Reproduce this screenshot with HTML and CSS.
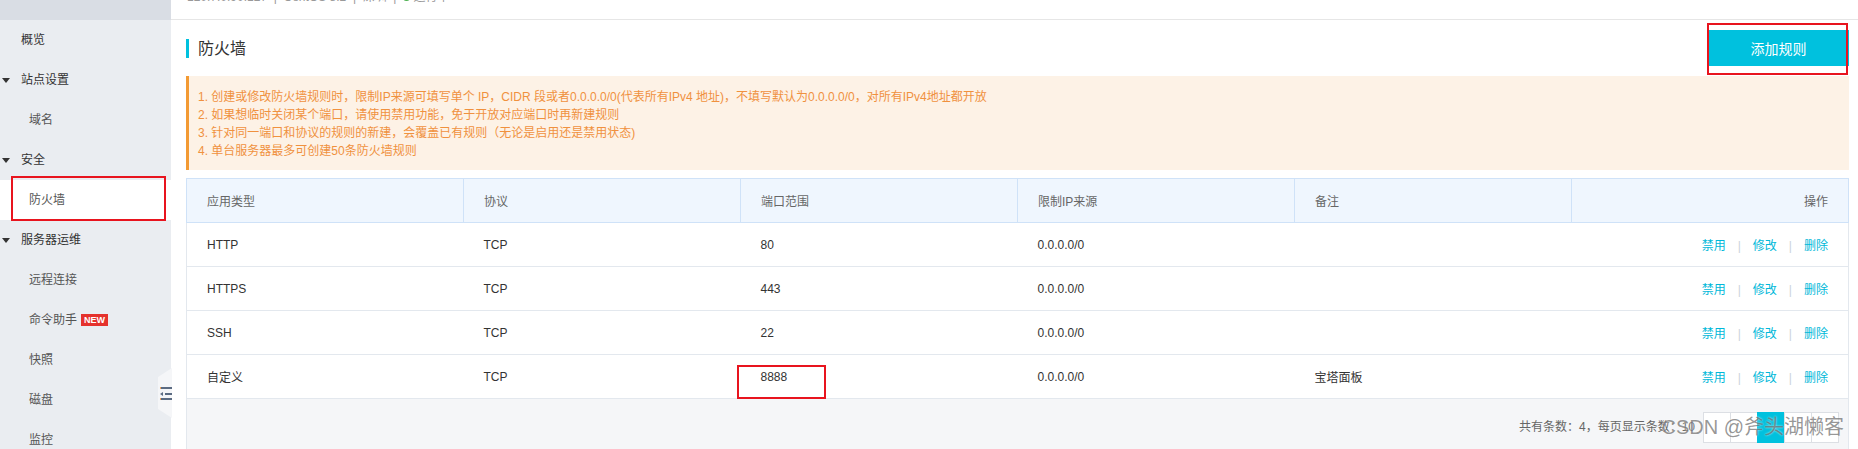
FILE: index.html
```html
<!DOCTYPE html>
<html lang="zh-CN">
<head>
    <meta charset="UTF-8">
    <title>防火墙</title>
    <link rel="stylesheet" href="styles.css">
</head>
<body>
<div class="page">
    <aside class="sidebar">
        <div class="side-top"></div>
        <ul class="menu">
            <li class="item">概览</li>
            <li class="group"><span class="caret"></span>站点设置</li>
            <li class="sub">域名</li>
            <li class="group"><span class="caret"></span>安全</li>
            <li class="sub active"><span class="mark">防火墙</span></li>
            <li class="group"><span class="caret"></span>服务器运维</li>
            <li class="sub">远程连接</li>
            <li class="sub">命令助手<span class="badge-new">NEW</span></li>
            <li class="sub">快照</li>
            <li class="sub">磁盘</li>
            <li class="sub">监控</li>
        </ul>
        <div class="collapse-handle">
            <svg width="14" height="50" viewBox="0 0 14 50">
                <rect x="2" y="19" width="12" height="2" fill="#5b6b82"/>
                <rect x="2" y="19" width="1" height="2" fill="#f0a35a"/>
                <path d="M2 26 L5 24 L5 28 Z" fill="#5b6b82"/>
                <rect x="7" y="25" width="7" height="2" fill="#5b6b82"/>
                <rect x="2" y="30" width="12" height="2" fill="#5b6b82"/>
                <rect x="2" y="30" width="1" height="2" fill="#f0a35a"/>
            </svg>
        </div>
    </aside>

    <main class="main">
        <div class="topbar">
            <span class="server-info">120.7.0.90.127 &nbsp;|&nbsp; CentOS 8.2 &nbsp;|&nbsp; 深圳 &nbsp;|&nbsp; <span class="dot"></span> 运行中</span>
        </div>

        <div class="content">
            <div class="title-row">
                <h2 class="title">防火墙</h2>
                <div class="btn-wrap">
                    <button class="btn-add">添加规则</button>
                </div>
            </div>

            <div class="notice">
                <div>1. 创建或修改防火墙规则时，限制IP来源可填写单个 IP，CIDR 段或者0.0.0.0/0(代表所有IPv4 地址)，不填写默认为0.0.0.0/0，对所有IPv4地址都开放</div>
                <div>2. 如果想临时关闭某个端口，请使用禁用功能，免于开放对应端口时再新建规则</div>
                <div>3. 针对同一端口和协议的规则的新建，会覆盖已有规则（无论是启用还是禁用状态)</div>
                <div>4. 单台服务器最多可创建50条防火墙规则</div>
            </div>

            <table class="rules">
                <thead>
                    <tr>
                        <th>应用类型</th>
                        <th>协议</th>
                        <th>端口范围</th>
                        <th>限制IP来源</th>
                        <th>备注</th>
                        <th class="ops">操作</th>
                    </tr>
                </thead>
                <tbody>
                    <tr>
                        <td>HTTP</td><td>TCP</td><td>80</td><td>0.0.0.0/0</td><td></td>
                        <td class="ops"><a>禁用</a><span class="sep">|</span><a>修改</a><span class="sep">|</span><a>删除</a></td>
                    </tr>
                    <tr>
                        <td>HTTPS</td><td>TCP</td><td>443</td><td>0.0.0.0/0</td><td></td>
                        <td class="ops"><a>禁用</a><span class="sep">|</span><a>修改</a><span class="sep">|</span><a>删除</a></td>
                    </tr>
                    <tr>
                        <td>SSH</td><td>TCP</td><td>22</td><td>0.0.0.0/0</td><td></td>
                        <td class="ops"><a>禁用</a><span class="sep">|</span><a>修改</a><span class="sep">|</span><a>删除</a></td>
                    </tr>
                    <tr>
                        <td>自定义</td><td>TCP</td><td><span class="port-mark">8888</span></td><td>0.0.0.0/0</td><td>宝塔面板</td>
                        <td class="ops"><a>禁用</a><span class="sep">|</span><a>修改</a><span class="sep">|</span><a>删除</a></td>
                    </tr>
                </tbody>
            </table>

            <div class="table-foot">
                <span class="total">共有条数：4，每页显示条数：10</span>
                <div class="pager">
                    <span class="pg"></span>
                    <span class="pg"></span>
                    <span class="pg current"></span>
                    <span class="pg"></span>
                    <span class="pg"></span>
                </div>
            </div>
        </div>
    </main>

    <div class="watermark">CSDN @斧头湖懒客</div>
</div>
</body>
</html>
```

FILE: styles.css
```css
html, body {
    margin: 0;
    padding: 0;
}
body {
    font-family: "Liberation Sans", "Noto Sans CJK SC", sans-serif;
    font-size: 12px;
    color: #333;
    background: #fff;
}

.page {
    position: relative;
    display: flex;
    width: 1858px;
    height: 449px;
    overflow: hidden;
}

/* sidebar */
.sidebar {
    position: relative;
    width: 171px;
    flex: none;
    background: #eaedf1;
}
.side-top {
    height: 20px;
    background: #d9dde4;
}
.menu {
    list-style: none;
    margin: 0;
    padding: 0;
}
.menu li {
    height: 40px;
    line-height: 40px;
    display: flex;
    align-items: center;
    white-space: nowrap;
}
.menu .item {
    padding-left: 21px;
    color: #333;
}
.menu .group {
    color: #333;
}
.menu .sub {
    padding-left: 29px;
    color: #555;
}
.menu .active {
    background: #fff;
}
.caret {
    width: 0;
    height: 0;
    margin-left: 2px;
    margin-right: 11px;
    border-left: 4px solid transparent;
    border-right: 4px solid transparent;
    border-top: 5px solid #333;
}
.mark {
    position: relative;
    height: 40px;
}
.mark::after {
    content: "";
    position: absolute;
    left: -18px;
    top: -4px;
    width: 151px;
    height: 41px;
    border: 2px solid #e8141e;
}
.badge-new {
    margin-left: 4px;
    height: 12px;
    line-height: 12px;
    padding: 0 3px;
    background: #e5322d;
    color: #fff;
    font-size: 9px;
    font-weight: bold;
}
.collapse-handle {
    position: absolute;
    left: 158px;
    top: 368px;
    width: 14px;
    height: 50px;
    background: #f5f6f8;
    clip-path: polygon(0 18%, 100% 0, 100% 100%, 0 82%);
}
.collapse-handle svg {
    display: block;
}

/* main */
.main {
    flex: 1;
    min-width: 0;
    background: #fff;
}
.topbar {
    height: 19px;
    border-bottom: 1px solid #e6e6e6;
    padding-left: 16px;
    overflow: hidden;
}
.server-info {
    display: block;
    margin-top: -10px;
    line-height: 14px;
    color: #999;
    white-space: nowrap;
}
.dot {
    display: inline-block;
    width: 7px;
    height: 7px;
    border-radius: 50%;
    background: #4cb050;
}
.content {
    padding: 0 9px 0 15px;
}

.title-row {
    height: 56px;
    display: flex;
    align-items: center;
    justify-content: space-between;
}
.title {
    margin: 0;
    padding-left: 9px;
    border-left: 3px solid #00c1de;
    font-size: 16px;
    line-height: 19px;
    font-weight: normal;
    color: #333;
}
.btn-wrap {
    position: relative;
}
.btn-wrap::after {
    content: "";
    position: absolute;
    left: -1px;
    right: 1px;
    top: -7px;
    bottom: -9px;
    border: 2px solid #e8141e;
}
.btn-add {
    display: block;
    width: 141px;
    height: 36px;
    border: none;
    background: #00c1de;
    color: #fff;
    font-family: inherit;
    font-size: 14px;
    padding: 0;
}

.notice {
    background: #fdf2e6;
    border-left: 3px solid #f39a33;
    padding: 12px 10px 10px 9px;
    color: #f0913e;
    line-height: 18px;
    white-space: nowrap;
}

/* table */
.rules {
    margin-top: 8px;
    width: 100%;
    border-collapse: collapse;
    table-layout: fixed;
}
.rules th {
    height: 43px;
    padding: 0 20px;
    background: #eff6fe;
    border: 1px solid #cfe2f8;
    text-align: left;
    font-weight: normal;
    color: #666;
}
.rules td {
    height: 43px;
    padding: 0 20px;
    border-bottom: 1px solid #e3e8ee;
    color: #333;
    white-space: nowrap;
}
.rules td:first-child {
    border-left: 1px solid #e3e8ee;
}
.rules td:last-child {
    border-right: 1px solid #e3e8ee;
}
.rules .ops {
    text-align: right;
}
.ops a {
    color: #00b8d9;
}
.ops .sep {
    color: #ccd3db;
    margin: 0 12px;
}
.port-mark {
    position: relative;
}
.port-mark::after {
    content: "";
    position: absolute;
    left: -24px;
    top: -5px;
    width: 85px;
    height: 30px;
    border: 2px solid #e8141e;
}

.table-foot {
    height: 50px;
    box-sizing: border-box;
    padding: 13px 9px 0 0;
    background: #f5f6f8;
    border-left: 1px solid #e3e8ee;
    border-right: 1px solid #e3e8ee;
    display: flex;
    justify-content: flex-end;
    align-items: flex-start;
}
.total {
    line-height: 31px;
    color: #666;
    margin-right: 9px;
}
.pager {
    display: flex;
}
.pg {
    width: 26px;
    height: 29px;
    background: #fff;
    border: 1px solid #dcdfe4;
    margin-left: -1px;
}
.pg.current {
    background: #00c1de;
    border-color: #00c1de;
}

.watermark {
    position: absolute;
    right: 14px;
    top: 413px;
    font-size: 20px;
    line-height: 28px;
    color: rgba(80, 80, 80, 0.6);
    text-shadow: 0 0 2px rgba(255, 255, 255, 0.8);
    white-space: nowrap;
}
```
